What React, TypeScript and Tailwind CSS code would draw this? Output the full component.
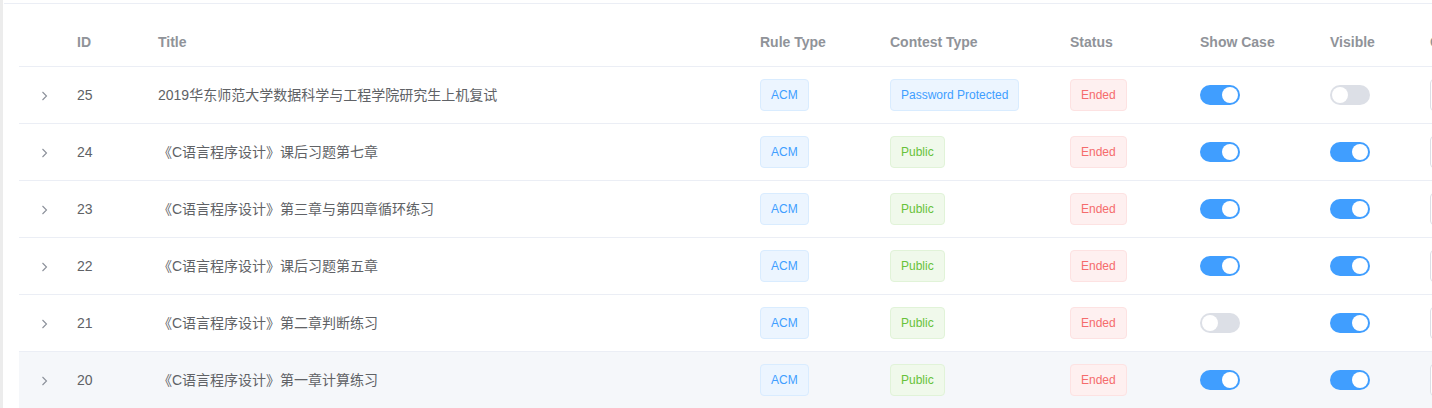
import React from "react";

type Contest = {
  id: number;
  title: string;
  contestType: "Password Protected" | "Public";
  showCase: boolean;
  visible: boolean;
};

const contests: Contest[] = [
  { id: 25, title: "2019华东师范大学数据科学与工程学院研究生上机复试", contestType: "Password Protected", showCase: true, visible: false },
  { id: 24, title: "《C语言程序设计》课后习题第七章", contestType: "Public", showCase: true, visible: true },
  { id: 23, title: "《C语言程序设计》第三章与第四章循环练习", contestType: "Public", showCase: true, visible: true },
  { id: 22, title: "《C语言程序设计》课后习题第五章", contestType: "Public", showCase: true, visible: true },
  { id: 21, title: "《C语言程序设计》第二章判断练习", contestType: "Public", showCase: false, visible: true },
  { id: 20, title: "《C语言程序设计》第一章计算练习", contestType: "Public", showCase: true, visible: true },
];

function Tag({ kind, children }: { kind: "primary" | "success" | "danger"; children: React.ReactNode }) {
  const styles = {
    primary: "bg-[#ecf5ff] border-[#d9ecff] text-[#409eff]",
    success: "bg-[#f0f9eb] border-[#e1f3d8] text-[#67c23a]",
    danger: "bg-[#fef0f0] border-[#fde2e2] text-[#f56c6c]",
  }[kind];
  return (
    <span className={`inline-flex h-8 items-center rounded border px-[10px] text-xs whitespace-nowrap ${styles}`}>
      {children}
    </span>
  );
}

function Switch({ on }: { on: boolean }) {
  return (
    <span
      className={`relative inline-block h-5 w-10 rounded-full align-middle ${on ? "bg-[#409eff]" : "bg-[#dcdfe6]"}`}
    >
      <span className={`absolute top-[2px] h-4 w-4 rounded-full bg-white ${on ? "left-[22px]" : "left-[2px]"}`} />
    </span>
  );
}

function Chevron() {
  return (
    <svg width="7" height="10" viewBox="0 0 7 10" className="ml-[2px] inline-block">
      <path d="M1.5 1 L5.5 5 L1.5 9" fill="none" stroke="#8a8f99" strokeWidth="1.1" />
    </svg>
  );
}

export default function App() {
  return (
    <div className="flex h-[408px] w-[1432px] overflow-hidden bg-white font-['Liberation_Sans','Noto_Sans_CJK_SC',sans-serif] text-sm">
      <div className="w-[3px] shrink-0 bg-[#ececec]" />
      <div className="min-w-0 flex-1 pl-[1px] pt-[3px]">
        <div className="border-t border-[#ebeef5] pl-[15px] pt-[15px]">
          <table className="w-[1551px] table-fixed border-collapse">
            <colgroup>
              <col className="w-[48px]" />
              <col className="w-[81px]" />
              <col className="w-[602px]" />
              <col className="w-[130px]" />
              <col className="w-[180px]" />
              <col className="w-[130px]" />
              <col className="w-[130px]" />
              <col className="w-[100px]" />
              <col className="w-[150px]" />
            </colgroup>
            <thead>
              <tr className="h-[47px] border-b border-[#ebeef5] text-left font-bold text-[#909399]">
                <th />
                <th className="px-[10px]">ID</th>
                <th className="px-[10px]">Title</th>
                <th className="px-[10px]">Rule Type</th>
                <th className="px-[10px]">Contest Type</th>
                <th className="px-[10px]">Status</th>
                <th className="px-[10px]">Show Case</th>
                <th className="px-[10px]">Visible</th>
                <th className="px-[10px]">Operation</th>
              </tr>
            </thead>
            <tbody className="text-[#606266]">
              {contests.map((c, i) => (
                <tr
                  key={c.id}
                  className={`h-[57px] border-b border-[#ebeef5] ${i === contests.length - 1 ? "bg-[#f5f7fa]" : ""}`}
                >
                  <td className="text-center">
                    <Chevron />
                  </td>
                  <td className="px-[10px]">{c.id}</td>
                  <td className="truncate px-[10px]">{c.title}</td>
                  <td className="px-[10px]">
                    <Tag kind="primary">ACM</Tag>
                  </td>
                  <td className="px-[10px]">
                    <Tag kind={c.contestType === "Public" ? "success" : "primary"}>{c.contestType}</Tag>
                  </td>
                  <td className="px-[10px]">
                    <Tag kind="danger">Ended</Tag>
                  </td>
                  <td className="px-[10px]">
                    <Switch on={c.showCase} />
                  </td>
                  <td className="px-[10px]">
                    <Switch on={c.visible} />
                  </td>
                  <td className="px-[10px]">
                    <span className="inline-block h-8 w-8 rounded border border-[#dcdfe6] bg-white align-middle" />
                  </td>
                </tr>
              ))}
            </tbody>
          </table>
        </div>
      </div>
    </div>
  );
}
